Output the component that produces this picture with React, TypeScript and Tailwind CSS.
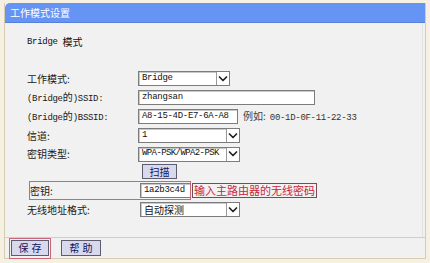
import React from "react";

const cjk = "font-['SimSun','Noto_Sans_CJK_SC',sans-serif]";
const asc = "font-['Liberation_Mono','Noto_Sans_CJK_SC',monospace] text-[9px] tracking-[-0.3px]";

function Chevron() {
  return (
    <svg width="10" height="8" viewBox="0 0 10 8" className="block">
      <path d="M1.5 2 L5 5.5 L8.5 2" fill="none" stroke="#222" strokeWidth="1.7" strokeLinecap="round" strokeLinejoin="round" />
    </svg>
  );
}

function Select({ w, h = 15, children }: { w: string; h?: string | number; children: React.ReactNode }) {
  return (
    <div className={`${w} h-[15px] flex items-stretch bg-white border border-[#7c7c7c] shadow-[inset_1px_1px_0_#c8c8c8]`}>
      <div className="flex-1 flex items-center pl-[3px] overflow-hidden whitespace-nowrap text-[#111]">{children}</div>
      <div className="w-[13px] flex items-center justify-center border-l border-[#9a9a9a] bg-white">
        <Chevron />
      </div>
    </div>
  );
}

function Input({ w, children }: { w: string; children?: React.ReactNode }) {
  return (
    <div className={`${w} h-[15px] flex items-center bg-white border border-[#7c7c7c] shadow-[inset_1px_1px_0_#c8c8c8] pl-[3px] text-[#111] whitespace-nowrap overflow-hidden`}>
      {children}
    </div>
  );
}

function Label({ children }: { children: React.ReactNode }) {
  return <div className="w-[111px] shrink-0 text-[10px] text-[#1a1a1a] whitespace-nowrap leading-none">{children}</div>;
}

export default function App() {
  return (
    <div className={`w-[430px] h-[263px] bg-[#f6f0e3] pl-[4px] pt-[3px] ${cjk}`}>
      <div className="w-[422px] h-[256px] flex flex-col border border-t-0 border-[#d6ccb0] bg-[#f1f1f1]">
        <div className="h-[20px] shrink-0 bg-[#6694f4] border-b border-[#5880d6] rounded-tl-[5px] flex items-center pl-[5px] text-white text-[10px] leading-none">
          工作模式设置
        </div>
        <div className="flex-1 flex flex-col pl-[22px] border-r border-[#e2e2e2] mr-[2px]">
          <div className="mt-[13px] h-[12px] flex items-center text-[10px] text-[#111] leading-none">
            <span className={asc}>Bridge</span>
            <span className="ml-[5px]">模式</span>
          </div>
          <div className="mt-[21px] flex flex-col">
            <div className="h-[19px] flex items-center">
              <Label>工作模式:</Label>
              <Select w="w-[92px]">
                <span className={asc}>Bridge</span>
              </Select>
            </div>
            <div className="h-[19px] flex items-center">
              <Label>
                <span className={asc}>(Bridge</span>的<span className={asc}>)SSID:</span>
              </Label>
              <Input w="w-[177px]">
                <span className={asc}>zhangsan</span>
              </Input>
            </div>
            <div className="h-[19px] flex items-center">
              <Label>
                <span className={asc}>(Bridge</span>的<span className={asc}>)BSSID:</span>
              </Label>
              <Input w="w-[100px]">
                <span className={asc}>A8-15-4D-E7-6A-A8</span>
              </Input>
              <span className="ml-[5px] text-[10px] text-[#444] whitespace-nowrap">
                例如:<span className={`${asc} ml-[4px] text-[#333]`}>00-1D-0F-11-22-33</span>
              </span>
            </div>
            <div className="h-[19px] flex items-center">
              <Label>信道:</Label>
              <Select w="w-[102px]">
                <span className={asc}>1</span>
              </Select>
            </div>
            <div className="h-[18px] flex items-center">
              <Label>密钥类型:</Label>
              <Select w="w-[102px]">
                <span className={`${asc} text-[8.5px] tracking-[-0.6px]`}>WPA-PSK/WPA2-PSK</span>
              </Select>
            </div>
            <div className="h-[17px] flex items-center">
              <div className="w-[115px] shrink-0" />
              <div className="w-[35px] h-[15px] flex items-center justify-center bg-[#d9d9ee] border border-[#5c5c6e] text-[10px] text-[#14145a] leading-none">
                扫描
              </div>
            </div>
            <div className="h-[21px] flex items-center relative">
              <div className="absolute left-[2px] top-[1px] w-[162px] h-[19px] border border-[#c9677a] pointer-events-none" />
              <div className="w-[113px] shrink-0 pl-[3px] text-[10px] text-[#1a1a1a] leading-none">密钥:</div>
              <Input w="w-[51px]">
                <span className={`${asc} text-[8.5px]`}>1a2b3c4d</span>
              </Input>
              <div className="ml-[1px] h-[15px] flex items-center px-[1px] border border-[#7a4a55] text-[11px] text-[#c8283c] leading-none whitespace-nowrap">
                输入主路由器的无线密码
              </div>
            </div>
            <div className="h-[17px] flex items-center">
              <div className="w-[113px] shrink-0 text-[10px] text-[#1a1a1a] leading-none">无线地址格式:</div>
              <Select w="w-[100px]">
                <span className="text-[10px] leading-none">自动探测</span>
              </Select>
            </div>
          </div>
        </div>
        <div className="h-[21px] shrink-0 border-t border-[#d8cfb2] flex items-center pl-[4px] gap-[10px]">
          <div className="w-[42px] h-[21px] border border-[#c9677a] flex items-center justify-center">
            <div className="w-[38px] h-[16px] flex items-center justify-center bg-[#d9d9ee] border border-[#5c5c6e] text-[10px] text-[#14145a] leading-none tracking-[3px] pl-[3px]">
              保存
            </div>
          </div>
          <div className="w-[40px] h-[16px] flex items-center justify-center bg-[#d9d9ee] border border-[#5c5c6e] text-[10px] text-[#14145a] leading-none tracking-[3px] pl-[3px]">
            帮助
          </div>
        </div>
      </div>
    </div>
  );
}
